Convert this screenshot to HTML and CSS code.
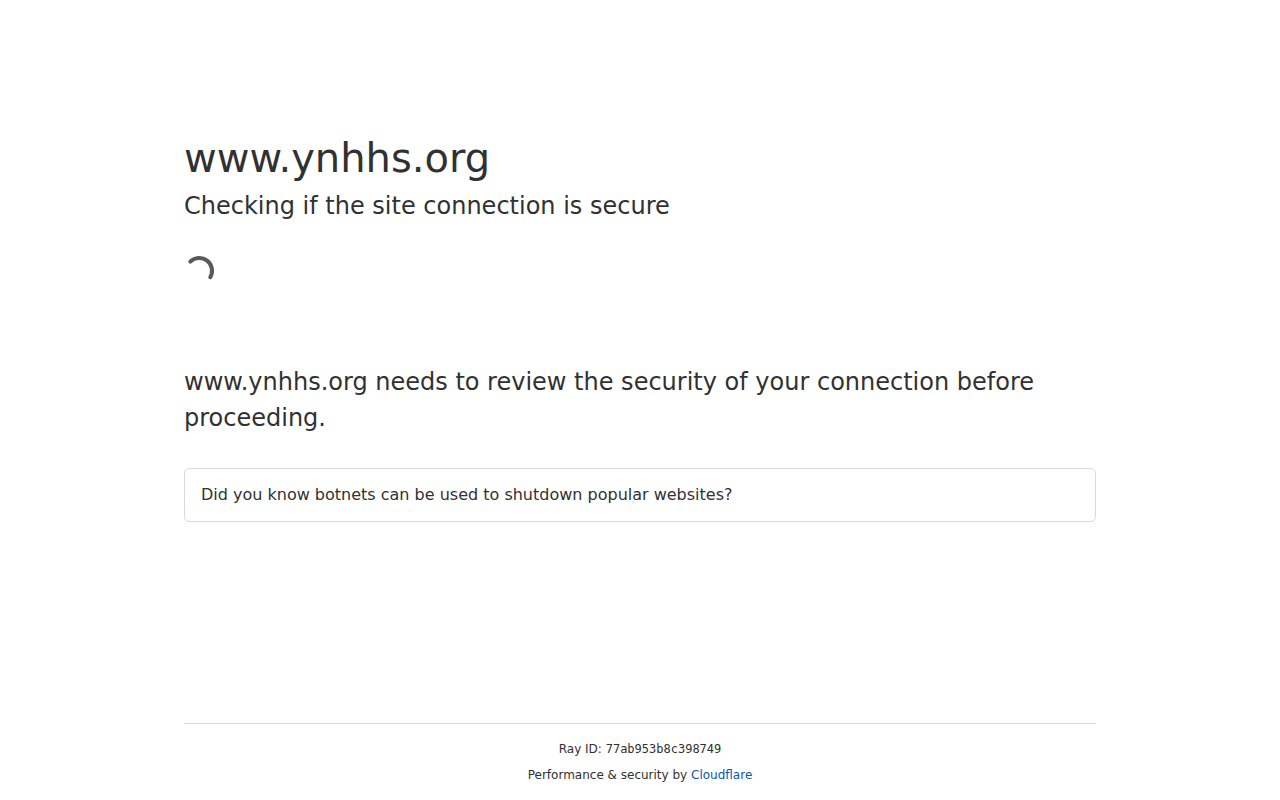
FILE: index.html
```html
<!DOCTYPE html>
<html lang="en">
<head>
  <meta charset="UTF-8" />
  <meta name="viewport" content="width=device-width, initial-scale=1" />
  <title>Just a moment...</title>
  <link rel="stylesheet" href="styles.css">
</head>
<body>
  <main class="main-wrapper" role="main">
    <div class="main-content">
      <h1 class="zone-name">www.ynhhs.org</h1>
      <h2 class="status">Checking if the site connection is secure</h2>
      <div class="spinner" role="status" aria-label="Loading">
        <svg class="spinner-arc" viewBox="0 0 30 30" aria-hidden="true">
          <path d="M6.3 5.6 A12.8 12.8 0 0 1 26.3 21.2" />
        </svg>
      </div>
      <div class="core-msg">www.ynhhs.org needs to review the security of your connection before proceeding.</div>
      <div class="fact">Did you know botnets can be used to shutdown popular websites?</div>
    </div>
  </main>
  <footer class="footer" role="contentinfo">
    <div class="footer-inner">
      <div>Ray ID: <code>77ab953b8c398749</code></div>
      <div>Performance &amp; security by <a href="#">Cloudflare</a></div>
    </div>
  </footer>
</body>
</html>
```
FILE: styles.css
```css
* {
  box-sizing: border-box;
  margin: 0;
  padding: 0;
}
body {
  display: flex;
  flex-direction: column;
  min-height: 100vh;
  background: #fff;
  color: #313131;
  font-family: "DejaVu Sans", sans-serif;
  line-height: 1.15;
}
.main-wrapper {
  display: flex;
  flex: 1;
  flex-direction: column;
  align-items: center;
}
.main-content {
  width: 100%;
  max-width: 960px;
  margin: 128px auto;
  padding: 0 24px;
}
.zone-name {
  font-size: 40px;
  font-weight: 500;
  line-height: 60px;
}
.status {
  font-size: 24px;
  font-weight: 500;
  line-height: 36px;
}
.spinner {
  margin: 32px 0;
  height: 76px;
}
.spinner-arc {
  display: block;
  width: 30px;
  height: 30px;
  overflow: visible;
  fill: none;
  stroke: #595959;
  stroke-width: 4;
  stroke-linecap: round;
}
.core-msg {
  margin-bottom: 32px;
  font-size: 24px;
  line-height: 36px;
}
.fact {
  padding: 14px 16px;
  border: 1px solid #d9d9d9;
  border-radius: 5px;
  font-size: 16px;
  line-height: 24px;
}
.footer {
  width: 100%;
  max-width: 960px;
  margin: 0 auto;
  padding: 0 24px;
  font-size: 12px;
  line-height: 18px;
}
.footer-inner {
  display: flex;
  flex-direction: column;
  gap: 8px;
  padding: 16px 0;
  border-top: 1px solid #d9d9d9;
  text-align: center;
}
code {
  font-family: "DejaVu Sans Mono", monospace;
  font-size: 12px;
}
a {
  color: #0a55b8;
  text-decoration: none;
}
```
